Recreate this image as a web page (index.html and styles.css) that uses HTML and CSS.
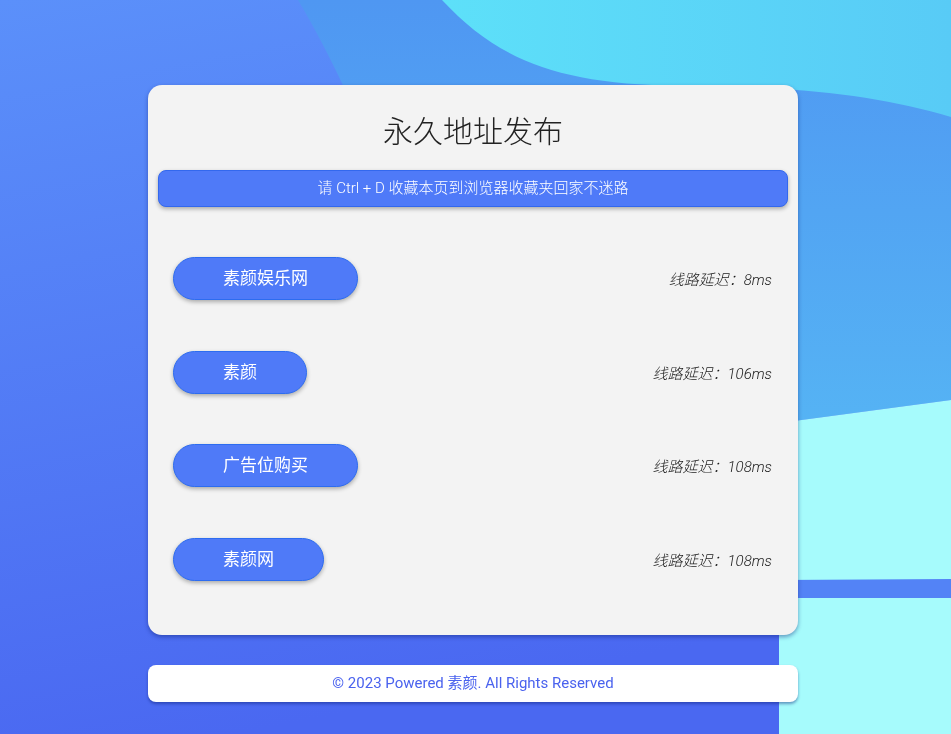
FILE: index.html
```html
<!DOCTYPE html>
<html lang="zh-CN">
<head>
<meta charset="utf-8">
<title>永久地址发布</title>
<link rel="stylesheet" href="styles.css">
</head>
<body>
<svg class="bg" viewBox="0 0 951 734" preserveAspectRatio="none" aria-hidden="true">
  <defs>
    <linearGradient id="gBase" x1="0" y1="0" x2="0.25" y2="1">
      <stop offset="0" stop-color="#5b90fa"/>
      <stop offset="1" stop-color="#4a68f1"/>
    </linearGradient>
    <linearGradient id="gMid" x1="0" y1="0" x2="0" y2="1">
      <stop offset="0" stop-color="#4f97f2"/>
      <stop offset="1" stop-color="#55b3f4"/>
    </linearGradient>
    <linearGradient id="gCyan" x1="0" y1="0" x2="1" y2="0">
      <stop offset="0" stop-color="#5de0f9"/>
      <stop offset="1" stop-color="#58cbf6"/>
    </linearGradient>
  </defs>
  <rect x="0" y="0" width="951" height="734" fill="url(#gBase)"/>
  <path d="M298 0 L951 0 L951 400 L779 423 L350 423 L350 100 Q 322 40 298 0 Z" fill="url(#gMid)"/>
  <path d="M442 0 C 500 62 560 84 680 86 C 800 86 880 96 951 117 L951 0 Z" fill="url(#gCyan)"/>
  <path d="M779 423 L951 400 L951 734 L779 734 Z" fill="#a6fbfc"/>
  <path d="M779 580 L951 579 L951 598 L779 598 Z" fill="#5383f6"/>
</svg>

<main class="page">
  <section class="card">
    <h1 class="title">永久地址发布</h1>
    <div class="notice">请 Ctrl + D 收藏本页到浏览器收藏夹回家不迷路</div>
    <ul class="routes">
      <li class="route"><a class="btn" href="#">素颜娱乐网</a><span class="delay">线路延迟：8ms</span></li>
      <li class="route"><a class="btn" href="#">素颜</a><span class="delay">线路延迟：106ms</span></li>
      <li class="route"><a class="btn" href="#">广告位购买</a><span class="delay">线路延迟：108ms</span></li>
      <li class="route"><a class="btn" href="#">素颜网</a><span class="delay">线路延迟：108ms</span></li>
    </ul>
  </section>
  <footer class="footer">© 2023 Powered 素颜. All Rights Reserved</footer>
</main>
</body>
</html>
```

FILE: styles.css
```css
html, body {
  margin: 0;
  padding: 0;
  height: 100%;
}

body {
  font-family: Roboto, "Noto Sans CJK SC", sans-serif;
  color: #222;
  overflow: hidden;
  background: #4f7af5;
}

.bg {
  position: fixed;
  top: 0;
  left: 0;
  width: 100%;
  height: 100%;
  z-index: 0;
  display: block;
}

.page {
  position: relative;
  z-index: 1;
  width: 650px;
  margin: 0 0 0 148px;
  padding-top: 85px;
}

.card {
  background: #f3f3f3;
  border-radius: 14px;
  padding: 27px 10px 54px;
  box-shadow: 0 2px 4px rgba(10, 30, 120, 0.45);
}

.title {
  margin: 0;
  font-size: 30px;
  line-height: 40px;
  font-weight: 300;
  text-align: center;
  color: #222;
}

.notice {
  margin-top: 18px;
  height: 35px;
  line-height: 35px;
  border: 1px solid #3368ee;
  border-radius: 8px;
  background: #4f7af8;
  color: #fff;
  font-size: 15px;
  font-weight: 300;
  text-align: center;
  box-shadow: 0 2px 4px rgba(0, 0, 0, 0.3);
}

.routes {
  list-style: none;
  margin: 50px 0 0;
  padding: 0 16px 0 15px;
  display: flex;
  flex-direction: column;
  gap: 50.67px;
}

.route {
  display: flex;
  align-items: center;
  justify-content: space-between;
}

.btn {
  display: inline-block;
  height: 41px;
  line-height: 41px;
  padding: 0 49px;
  border: 1px solid #2d6cf0;
  border-radius: 22px;
  background: #4f7af8;
  color: #fff;
  font-size: 17px;
  text-decoration: none;
  box-shadow: 0 2px 4px rgba(0, 0, 0, 0.3);
}

.delay {
  font-size: 15px;
  font-style: italic;
  font-weight: 300;
  color: #1a1a1a;
}

.footer {
  margin-top: 30px;
  height: 37px;
  line-height: 37px;
  background: #fff;
  border-radius: 8px;
  text-align: center;
  color: #4a62ee;
  font-size: 15px;
  box-shadow: 0 2px 3px rgba(10, 30, 120, 0.45);
}
```
